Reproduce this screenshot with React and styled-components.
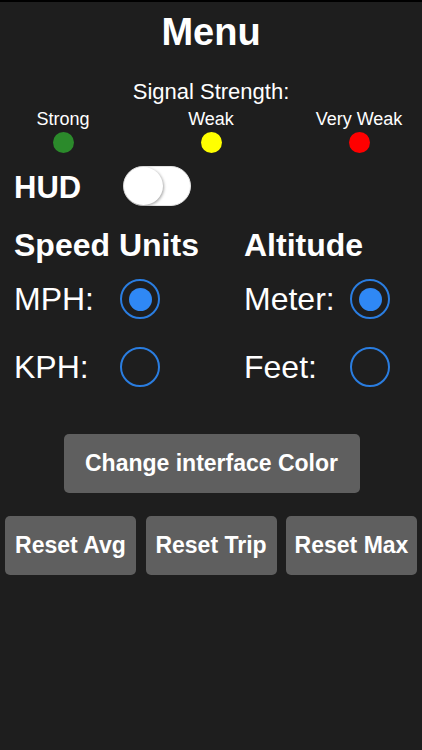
import React, { useState } from "react";
import styled, { createGlobalStyle } from "styled-components";

const GlobalStyle = createGlobalStyle`
  html, body {
    margin: 0;
    padding: 0;
    background: #1e1e1e;
  }
  body {
    font-family: "Liberation Sans", Arial, sans-serif;
    color: #fff;
  }
`;

const SIGNALS = [
  { label: "Strong", color: "#2b8a2b" },
  { label: "Weak", color: "#ffff00" },
  { label: "Very Weak", color: "#ff0000" },
];

const App = () => {
  const [hud, setHud] = useState(false);
  const [speed, setSpeed] = useState("mph");
  const [altitude, setAltitude] = useState("meter");

  return (
    <>
      <GlobalStyle />
      <Screen>
        <Title>Menu</Title>

        <SignalTitle>Signal Strength:</SignalTitle>
        <SignalGrid>
          {SIGNALS.map((s) => (
            <SignalItem key={s.label}>
              <SignalLabel>{s.label}</SignalLabel>
              <Dot $color={s.color} />
            </SignalItem>
          ))}
        </SignalGrid>

        <HudRow>
          <HudLabel>HUD</HudLabel>
          <Switch $on={hud} onClick={() => setHud(!hud)}>
            <Knob $on={hud} />
          </Switch>
        </HudRow>

        <Units>
          <UnitColumn>
            <Heading>Speed Units</Heading>
            <OptionRow>
              <OptionLabel>MPH:</OptionLabel>
              <Radio $checked={speed === "mph"} onClick={() => setSpeed("mph")} />
            </OptionRow>
            <OptionRow>
              <OptionLabel>KPH:</OptionLabel>
              <Radio $checked={speed === "kph"} onClick={() => setSpeed("kph")} />
            </OptionRow>
          </UnitColumn>
          <UnitColumn>
            <Heading>Altitude</Heading>
            <OptionRow>
              <OptionLabel>Meter:</OptionLabel>
              <Radio
                $checked={altitude === "meter"}
                onClick={() => setAltitude("meter")}
              />
            </OptionRow>
            <OptionRow>
              <OptionLabel>Feet:</OptionLabel>
              <Radio
                $checked={altitude === "feet"}
                onClick={() => setAltitude("feet")}
              />
            </OptionRow>
          </UnitColumn>
        </Units>

        <ColorRow>
          <GrayButton $wide>Change interface Color</GrayButton>
        </ColorRow>

        <ResetRow>
          <GrayButton>Reset Avg</GrayButton>
          <GrayButton>Reset Trip</GrayButton>
          <GrayButton>Reset Max</GrayButton>
        </ResetRow>
      </Screen>
    </>
  );
};

const Screen = styled.div`
  width: 422px;
  height: 750px;
  box-sizing: border-box;
  border-top: 2px solid #000;
  background: #1e1e1e;
  padding-top: 8px;
  overflow: hidden;
  display: flex;
  flex-direction: column;
`;

const Title = styled.h1`
  margin: 0;
  font-size: 38px;
  line-height: 44px;
  font-weight: bold;
  text-align: center;
`;

const SignalTitle = styled.div`
  margin-top: 26px;
  font-size: 22px;
  line-height: 24px;
  text-align: center;
`;

const SignalGrid = styled.div`
  display: grid;
  grid-template-columns: repeat(3, 148px);
  justify-content: center;
  margin-top: 5px;
`;

const SignalItem = styled.div`
  display: flex;
  flex-direction: column;
  align-items: center;
  gap: 3px;
`;

const SignalLabel = styled.span`
  font-size: 18px;
  line-height: 20px;
`;

const Dot = styled.span`
  width: 21px;
  height: 21px;
  border-radius: 50%;
  background: ${(p) => p.$color};
`;

const HudRow = styled.div`
  display: flex;
  align-items: center;
  padding-left: 14px;
  margin-top: 13px;
`;

const HudLabel = styled.span`
  font-size: 31px;
  font-weight: bold;
  width: 109px;
  padding-top: 4px;
`;

const Switch = styled.div`
  width: 68px;
  height: 40px;
  box-sizing: border-box;
  border-radius: 20px;
  background: ${(p) => (p.$on ? "#4cd964" : "#fff")};
  border: 1px solid #e2e2e2;
  display: flex;
  justify-content: ${(p) => (p.$on ? "flex-end" : "flex-start")};
  cursor: pointer;
`;

const Knob = styled.span`
  width: 39px;
  height: 38px;
  border-radius: 50%;
  background: #fff;
  box-shadow: 1px 1px 3px rgba(0, 0, 0, 0.35);
`;

const Units = styled.div`
  display: grid;
  grid-template-columns: 230px 1fr;
  padding-left: 14px;
  margin-top: 21px;
`;

const UnitColumn = styled.div`
  display: flex;
  flex-direction: column;
`;

const Heading = styled.h2`
  margin: 0 0 16px;
  font-size: 32px;
  line-height: 36px;
  font-weight: bold;
`;

const OptionRow = styled.div`
  display: flex;
  align-items: center;
  height: 40px;
  margin-bottom: 28px;
`;

const OptionLabel = styled.span`
  width: 106px;
  font-size: 32px;
  line-height: 40px;
`;

const Radio = styled.span`
  width: 40px;
  height: 40px;
  box-sizing: border-box;
  border-radius: 50%;
  border: 2px solid #2a7de0;
  display: flex;
  align-items: center;
  justify-content: center;
  cursor: pointer;

  &::after {
    content: "";
    width: 23px;
    height: 23px;
    border-radius: 50%;
    background: #2f88f5;
    display: ${(p) => (p.$checked ? "block" : "none")};
  }
`;

const ColorRow = styled.div`
  display: flex;
  justify-content: center;
  margin-top: 19px;
  padding-left: 1px;
`;

const GrayButton = styled.button`
  width: ${(p) => (p.$wide ? "296px" : "auto")};
  height: 59px;
  border: none;
  border-radius: 5px;
  background: #5f5f5f;
  color: #fff;
  font-family: "Liberation Sans", Arial, sans-serif;
  font-size: 23px;
  font-weight: bold;
  padding: 0;
  cursor: pointer;
`;

const ResetRow = styled.div`
  display: grid;
  grid-template-columns: repeat(3, 1fr);
  gap: 9.5px;
  padding: 0 5px;
  margin-top: 23px;
`;

export default App;
